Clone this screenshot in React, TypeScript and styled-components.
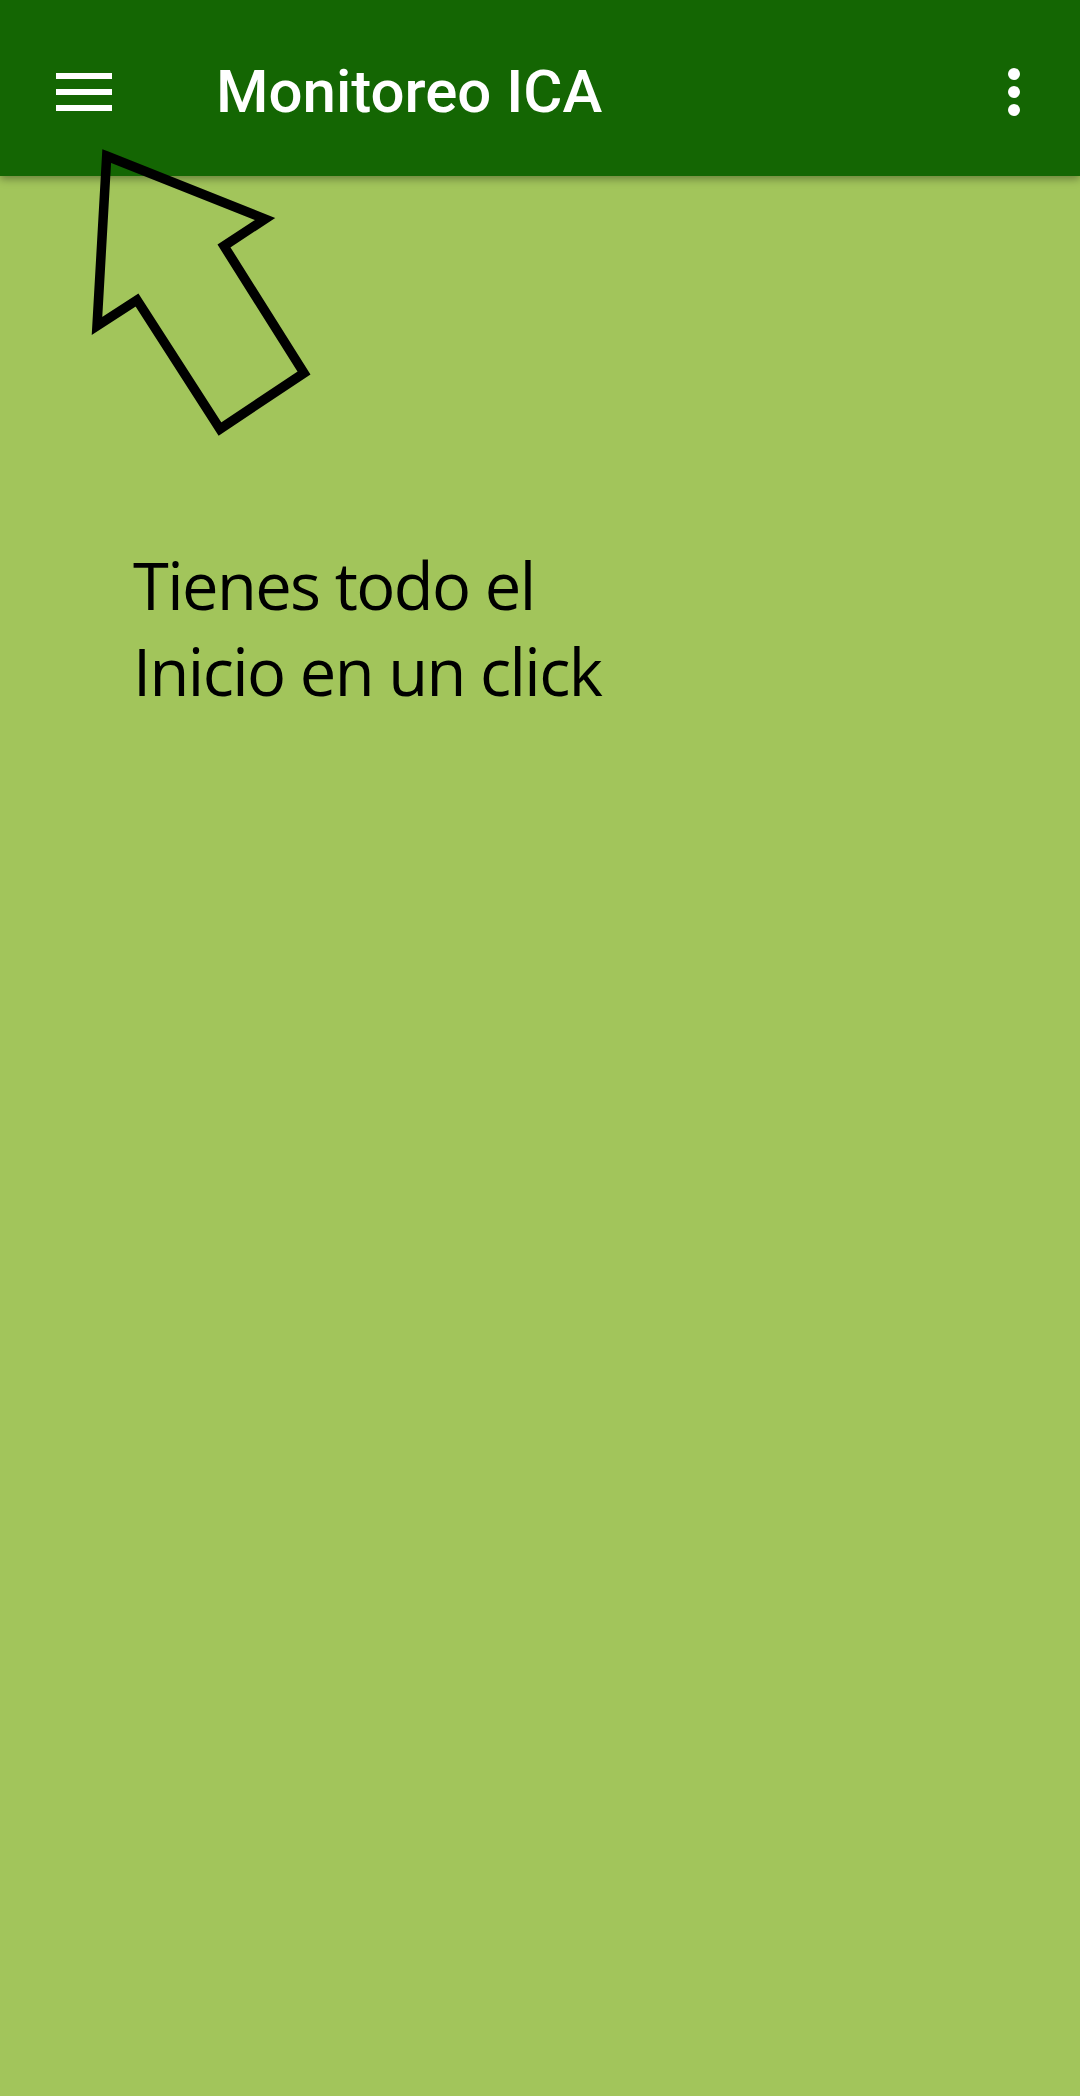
import React from 'react';
import { createGlobalStyle, styled } from 'styled-components';

const GlobalStyle = createGlobalStyle`
  html, body {
    margin: 0;
    padding: 0;
    background: #a2c55b;
  }
  #root {
    min-height: 2096px;
  }
`;

const App: React.FC = () => {
  return (
    <PageStyle>
      <GlobalStyle />
      <AppBarStyle>
        <MenuButtonStyle aria-label="Menú">
          <svg width="56" height="38" viewBox="0 0 56 38">
            <rect x="0" y="0" width="56" height="6" fill="#fff" />
            <rect x="0" y="16" width="56" height="6" fill="#fff" />
            <rect x="0" y="32" width="56" height="6" fill="#fff" />
          </svg>
        </MenuButtonStyle>
        <TitleStyle>Monitoreo ICA</TitleStyle>
        <OverflowButtonStyle aria-label="Más opciones">
          <svg width="12" height="48" viewBox="0 0 12 48">
            <circle cx="6" cy="6" r="6" fill="#fff" />
            <circle cx="6" cy="24" r="6" fill="#fff" />
            <circle cx="6" cy="42" r="6" fill="#fff" />
          </svg>
        </OverflowButtonStyle>
      </AppBarStyle>
      <HintArrowStyle width="230" height="300" viewBox="0 0 230 300">
        <polygon
          points="21.7,16 180,79 139,106 219,233 135,289 52,160 12,186"
          fill="none"
          stroke="#000"
          strokeWidth="9.5"
          strokeLinejoin="miter"
        />
      </HintArrowStyle>
      <HintTextStyle>
        Tienes todo el
        <br />
        Inicio en un click
      </HintTextStyle>
    </PageStyle>
  );
};

const PageStyle = styled.div`
  position: relative;
  min-height: 2096px;
  background: #a2c55b;
  overflow: hidden;
`;

const AppBarStyle = styled.header`
  display: flex;
  flex-flow: row nowrap;
  align-items: center;
  height: 176px;
  box-sizing: border-box;
  padding-top: 7px;
  background: #146603;
  box-shadow: 0 3px 8px rgba(0, 0, 0, 0.35);
`;

const IconButtonStyle = styled.button`
  display: flex;
  align-items: center;
  justify-content: center;
  padding: 0;
  border: none;
  background: transparent;
  cursor: pointer;
`;

const MenuButtonStyle = styled(IconButtonStyle)`
  margin-left: 56px;
`;

const OverflowButtonStyle = styled(IconButtonStyle)`
  margin-left: auto;
  margin-right: 60px;
`;

const TitleStyle = styled.h1`
  margin: 0 0 0 104px;
  color: #fff;
  font-family: Roboto, 'Noto Sans', sans-serif;
  font-weight: 500;
  font-size: 60px;
  line-height: 1;
  white-space: nowrap;
`;

const HintArrowStyle = styled.svg`
  position: absolute;
  left: 85px;
  top: 140px;
`;

const HintTextStyle = styled.p`
  margin: 366px 0 0 133px;
  color: #000;
  font-family: 'Open Sans', 'Noto Sans', sans-serif;
  font-weight: 400;
  font-size: 65px;
  letter-spacing: -1.6px;
  line-height: 86px;
`;

export default App;
